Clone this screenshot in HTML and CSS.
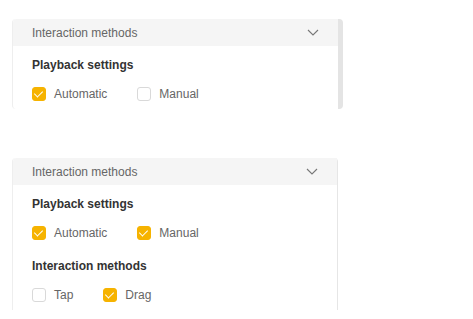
FILE: index.html
```html
<!DOCTYPE html>
<html>
<head>
	<title>Interaction methods</title>
	<link rel="stylesheet" href="styles.css">
</head>
<body>
	<div class="panel panel-scroll">
		<div class="panel-head">
			<span>Interaction methods</span>
			<svg class="chevron" width="12" height="7" viewBox="0 0 12 7"><path d="M1 1l5 5 5-5" fill="none" stroke="#777" stroke-width="1.1"/></svg>
		</div>
		<div class="panel-body">
			<div class="section">
				<div class="section-title">Playback settings</div>
				<div class="options">
					<label class="option"><span class="box checked"></span>Automatic</label>
					<label class="option"><span class="box"></span>Manual</label>
				</div>
			</div>
		</div>
	</div>

	<div class="panel panel-line">
		<div class="panel-head">
			<span>Interaction methods</span>
			<svg class="chevron" width="12" height="7" viewBox="0 0 12 7"><path d="M1 1l5 5 5-5" fill="none" stroke="#777" stroke-width="1.1"/></svg>
		</div>
		<div class="panel-body">
			<div class="section">
				<div class="section-title">Playback settings</div>
				<div class="options">
					<label class="option"><span class="box checked"></span>Automatic</label>
					<label class="option"><span class="box checked"></span>Manual</label>
				</div>
			</div>
			<div class="section">
				<div class="section-title">Interaction methods</div>
				<div class="options">
					<label class="option"><span class="box"></span>Tap</label>
					<label class="option"><span class="box checked"></span>Drag</label>
				</div>
			</div>
		</div>
	</div>
</body>
</html>
```

FILE: styles.css
```css
body {
	font-family: "Liberation Sans", Arial, sans-serif;
	font-size: 12px;
	background-color: white;
	margin: 0;
	padding: 19px 12px 0;
}

.panel {
	width: 326px;
	background-color: white;
	border-left: 1px solid #eeeeee;
	border-radius: 4px 4px 0 0;
	box-sizing: border-box;
}

.panel-scroll {
	width: 331px;
	border-right: 5px solid #e4e4e4;
	border-radius: 4px;
	margin-bottom: 49px;
}

.panel-line {
	border-right: 1px solid #e6e6e6;
}

.panel-head {
	display: flex;
	align-items: center;
	justify-content: space-between;
	height: 27px;
	padding: 0 19px 0 19px;
	background-color: #f5f5f5;
	color: #666;
	border-radius: 4px 0 0 0;
}

.panel-body {
	padding: 11px 19px 4px;
}

.section + .section {
	margin-top: 14px;
}

.section-title {
	font-weight: bold;
	color: #333;
	line-height: 16px;
}

.options {
	display: flex;
	margin-top: 10px;
	height: 22px;
	align-items: center;
}

.option {
	display: flex;
	align-items: center;
	gap: 8px;
	color: #666;
	margin-right: 30px;
}

.box {
	width: 14px;
	height: 14px;
	box-sizing: border-box;
	border: 1px solid #d9d9d9;
	border-radius: 3px;
	background-color: white;
	position: relative;
}

.box.checked {
	border-color: #f6b300;
	background-color: #f6b300;
}

.box.checked::after {
	content: "";
	position: absolute;
	left: 3px;
	top: 1px;
	width: 4px;
	height: 7px;
	border: solid white;
	border-width: 0 1.5px 1.5px 0;
	transform: rotate(45deg);
}
```
